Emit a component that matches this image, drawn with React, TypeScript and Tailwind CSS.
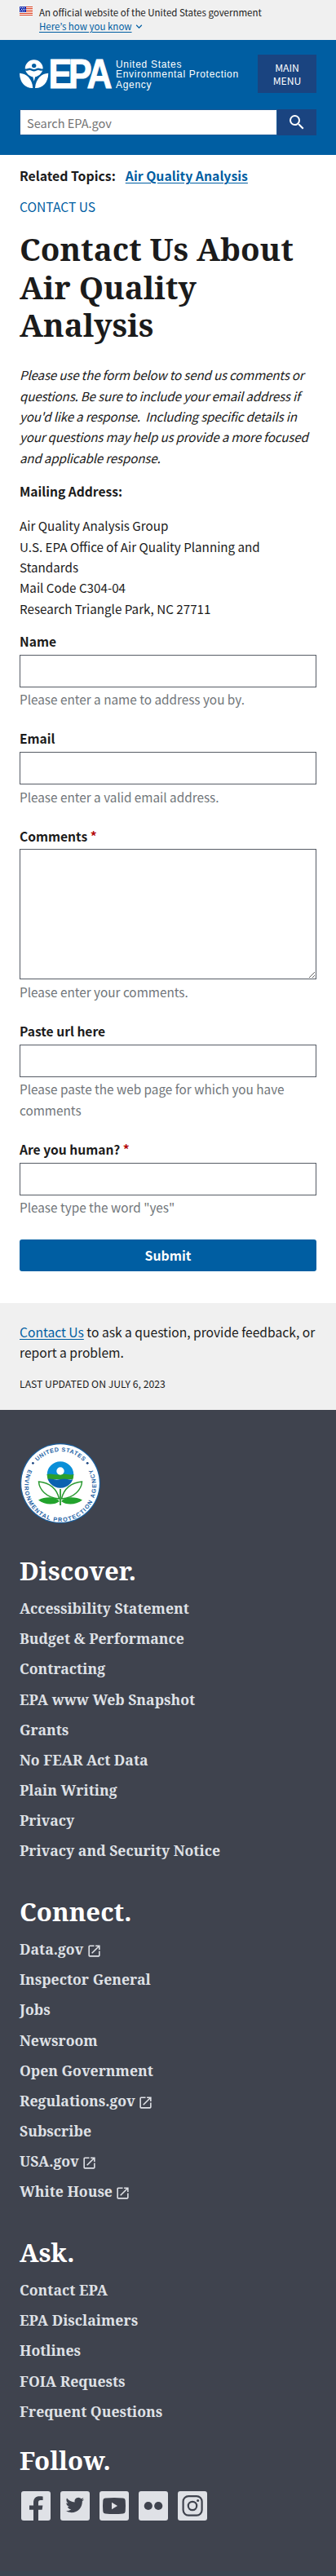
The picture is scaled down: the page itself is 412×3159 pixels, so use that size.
import React from "react";
import { MdExpandMore, MdOpenInNew, MdSearch } from "react-icons/md";

const discover = [
  "Accessibility Statement",
  "Budget & Performance",
  "Contracting",
  "EPA www Web Snapshot",
  "Grants",
  "No FEAR Act Data",
  "Plain Writing",
  "Privacy",
  "Privacy and Security Notice",
];
const connect = [
  "Data.gov",
  "Inspector General",
  "Jobs",
  "Newsroom",
  "Open Government",
  "Regulations.gov",
  "Subscribe",
  "USA.gov",
  "White House",
];
const ask = ["Contact EPA", "EPA Disclaimers", "Hotlines", "FOIA Requests", "Frequent Questions"];
const external = new Set(["Data.gov", "Regulations.gov", "USA.gov", "White House"]);

function Flag() {
  return (
    <svg width="16" height="11" viewBox="0 0 16 11" className="mt-px shrink-0">
      <rect width="16" height="11" fill="#fff" />
      {[0, 2, 4, 6, 8, 10].map((y) => (
        <rect key={y} y={y} width="16" height="1" fill="#db3e1f" />
      ))}
      <rect width="8" height="7" fill="#1e33b1" />
      {[1, 3, 5].map((y) =>
        [1, 3, 5].map((x) => (
          <rect key={`${x}-${y}`} x={x + (y === 3 ? 1 : 0)} y={y} width="1" height="1" fill="#fff" />
        ))
      )}
    </svg>
  );
}

function Logo() {
  return (
    <svg width="118" height="60" viewBox="0 -12 118 60" className="-my-3 shrink-0 overflow-visible" fill="#fff">
      <path d="M6.7 11.2a11 11 0 0 1 22 0c-2.2 1.2-3.7-.6-5.7-.6s-3.3 1.4-5.3 1.4-3.5-1.4-5.5-1.4-3.3 1.8-5.5.6z" />
      <circle cx="17.7" cy="7.6" r="2.7" fill="#005ea2" />
      <path d="M7.3 13.6c2 .5 3.2-.7 5-.7s3.2 1.5 5.3 1.5 3.5-1.5 5.4-1.5 3 1.2 5.1.7c-1.4 4-5 7.2-8.9 7.7l-1.5 5.5-1.5-5.5c-4-.5-7.5-3.7-8.9-7.7z" />
      <path d="M0 16.8c8 .4 15.5 6.5 16.3 18.2C7.5 35.5.2 29 0 16.8z" />
      <path d="M35.3 16.8c-8 .4-15.5 6.5-16.3 18.2 8.8.5 16.1-6 16.3-18.2z" />
      <text
        transform="translate(0 34.7) scale(.86 1)"
        x="41.3 69.9 96"
        fontFamily="Liberation Sans, Arial, sans-serif"
        fontWeight="700"
        fontSize="50"
        stroke="#fff"
        strokeWidth="1"
      >
        EPA
      </text>
    </svg>
  );
}

function Seal() {
  return (
    <svg width="100" height="100" viewBox="0 0 100 100" className="block">
      <circle cx="50" cy="50" r="49" fill="#1a5f9e" />
      <circle cx="50" cy="50" r="47.8" fill="#fff" />
      <defs>
        <path id="seal-top" d="M11 50a39 39 0 0 1 78 0" />
        <path id="seal-bottom" d="M15.2 26.4A43.9 43.9 0 1 0 84.8 26.4" />
      </defs>
      <g fontFamily="Liberation Sans, Arial, sans-serif" fontWeight="700" fontSize="7.2" fill="#1c62a5">
        <text>
          <textPath href="#seal-top" startOffset="50%" textAnchor="middle" textLength="63">UNITED STATES</textPath>
        </text>
        <text>
          <textPath href="#seal-bottom" startOffset="50%" textAnchor="middle" textLength="180">
            ENVIRONMENTAL PROTECTION AGENCY
          </textPath>
        </text>
      </g>
      <circle cx="16.4" cy="25.3" r="1.4" fill="#1a4480" />
      <circle cx="83.2" cy="25.3" r="1.4" fill="#1a4480" />
      <clipPath id="bloom">
        <circle cx="50" cy="39.5" r="16.3" />
      </clipPath>
      <g clipPath="url(#bloom)">
        <rect x="33" y="22" width="34" height="18" fill="#0a8fd8" />
        <path d="M33 39q4.5-.8 8.5 0t8.5 0 8.5 0 8.5 0v6H33z" fill="#2ca02c" />
        <path d="M33 45q4.5-.8 8.5 0t8.5 0 8.5 0 8.5 0v12H33z" fill="#0a62b0" />
      </g>
      <circle cx="50" cy="35" r="4.7" fill="#fff" />
      <g fill="none" stroke="#2b9a32" strokeWidth="1.5">
        <path d="M48.5 69C46 57 37 49 23.5 48c.5 9 9 20 25 21z" />
        <path d="M51.5 69C54 57 63 49 76.5 48c-.5 9-9 20-25 21z" />
        <path d="M50 57v20" strokeWidth="1.8" />
      </g>
      <path d="M49 72c-5-6-17-6-26-1.500C31 77 43 77 49 72zM51 72c5-6 17-6 26-1.500C69 77 57 77 51 72z" fill="#22a32c" />
    </svg>
  );
}

function Social() {
  const tile = <rect width="36" height="36" rx="3" fill="#dfe1e6" />;
  return (
    <div className="ml-0.5 mt-[18px] flex gap-3">
      <svg width="36" height="37" viewBox="0 0 36 37">
        {tile}
        <path
          d="M15 37V22.800h-5v-5.300h5v-3.300C15 8.900 18 6.300 22.300 6.300c2 0 3.800.1 4.300.2v4.400h-2.800c-2.200 0-2.800 1.200-2.800 2.700v3.900h5.400l-.8 5.300H21V37z"
          fill="#3f434e"
        />
      </svg>
      <svg width="36" height="37" viewBox="0 0 36 37">
        {tile}
        <path
          transform="translate(5.5 5)"
          d="M23.643 4.937c-.835.37-1.732.62-2.675.733a4.670 4.670 0 0 0 2.048-2.578 9.300 9.300 0 0 1-2.958 1.130 4.660 4.660 0 0 0-7.938 4.250 13.229 13.229 0 0 1-9.602-4.868c-.4.690-.630 1.490-.630 2.342A4.660 4.660 0 0 0 3.960 9.824a4.647 4.647 0 0 1-2.110-.583v.060a4.660 4.660 0 0 0 3.737 4.568 4.692 4.692 0 0 1-2.104.080 4.661 4.661 0 0 0 4.352 3.234 9.348 9.348 0 0 1-5.786 1.995 9.500 9.500 0 0 1-1.112-.065 13.175 13.175 0 0 0 7.140 2.093c8.570 0 13.255-7.098 13.255-13.254 0-.200-.005-.402-.014-.602a9.470 9.470 0 0 0 2.323-2.410z"
          fill="#3f434e"
        />
      </svg>
      <svg width="36" height="37" viewBox="0 0 36 37">
        {tile}
        <path
          d="M7 8.500q11-1 22 0 2.500.3 2.700 2.700.6 7 0 13.600-.2 2.400-2.700 2.700-11 1-22 0-2.500-.3-2.700-2.700-.6-7 0-13.600Q4.500 8.800 7 8.500z"
          fill="#3f434e"
        />
        <path d="M15 13.700v8.600l7-4.300z" fill="#dfe1e6" />
      </svg>
      <svg width="36" height="37" viewBox="0 0 36 37">
        {tile}
        <circle cx="11.8" cy="18" r="5.1" fill="#3f434e" />
        <circle cx="24.2" cy="18" r="5.1" fill="#3f434e" />
      </svg>
      <svg width="36" height="37" viewBox="0 0 36 37">
        {tile}
        <g fill="none" stroke="#3f434e" strokeWidth="2.2">
          <rect x="6.6" y="6.1" width="23" height="23.5" rx="6.5" />
          <circle cx="18" cy="18" r="5.2" />
        </g>
        <circle cx="24.6" cy="11.4" r="1.5" fill="#3f434e" />
      </svg>
    </div>
  );
}

function Field({ label, help, required, area }: { label: string; help: string; required?: boolean; area?: boolean }) {
  return (
    <div className="flex flex-col">
      <label className="text-[15.6px] font-bold">
        {label}
        {required && <span className="text-[#b50909]"> *</span>}
      </label>
      {area ? (
        <textarea className="mt-[3.3px] block h-40 w-full resize border border-[#565c65] bg-white" />
      ) : (
        <input className="mt-[3.3px] block h-10 w-full border border-[#565c65] bg-white" />
      )}
      <p className="mt-[2.6px] text-[15.3px] text-[#71767a]">{help}</p>
    </div>
  );
}

function LinkGroup({ title, links }: { title: string; links: string[] }) {
  return (
    <section>
      <h2 className="text-[31.1px] font-bold leading-10 text-white">{title}</h2>
      <ul className="mt-[7.8px]">
        {links.map((l) => (
          <li key={l} className="flex h-[37.17px] items-center text-[17.6px] font-bold leading-[37.17px] text-[#dfe1e6]">
            {l}
            {external.has(l) && <MdOpenInNew size={19} className="ml-[3.5px] mt-1" />}
          </li>
        ))}
      </ul>
    </section>
  );
}

export default function App() {
  return (
    <div className="w-full bg-white font-['Noto_Sans_CJK_JP','Noto_Sans',sans-serif] text-[15.2px] leading-[25.4px] text-[#1b1b1b]">
      <div className="flex h-[49px] gap-2 bg-[#f0f0f0] px-6 pt-[7px] text-[11.5px] leading-4">
        <Flag />
        <div>
          <p>An official website of the United States government</p>
          <p className="flex items-center text-[#005ea2]">
            <span className="underline underline-offset-2">Here’s how you know</span>
            <MdExpandMore size={15} className="ml-px mt-0.5" stroke="currentColor" />
          </p>
        </div>
      </div>

      <header className="h-[141px] bg-[#005ea2] px-6 pt-[18px]">
        <div className="flex justify-between">
          <div className="flex pt-[5.5px]">
            <Logo />
            <p className="font-['Liberation_Sans',Arial,sans-serif] text-[12px] leading-[12.5px] tracking-[0.7px] text-white">
              United States
              <br />
              Environmental Protection
              <br />
              Agency
            </p>
          </div>
          <button className="h-[47px] w-[72px] shrink-0 bg-[#1a4480] px-3 text-[12.2px] leading-4 text-white">
            MAIN MENU
          </button>
        </div>
        <div className="mt-5 flex h-8">
          <input
            className="h-8 min-w-0 flex-1 border border-[#1a5a96] bg-white px-2 text-[14.57px] text-[#1b1b1b] placeholder:text-[#757575]"
            placeholder="Search EPA.gov"
          />
          <button className="flex w-[48px] items-center justify-center bg-[#1a4480] text-white">
            <MdSearch size={24} />
          </button>
        </div>
      </header>

      <main className="h-[1408px] px-6 pt-3.5">
        <p className="text-[15.8px] font-bold leading-6">
          Related Topics:
          <a className="ml-3 text-[#005ea2] underline underline-offset-2">Air Quality Analysis</a>
        </p>
        <p className="mt-[13px] text-[15.6px] leading-6 text-[#005ea2]">CONTACT US</p>
        <h1 className="mt-[17px] font-['Noto_Serif','DejaVu_Serif_Condensed',serif] text-[38.5px] font-bold leading-[46.5px]">
          Contact Us About
          <br />
          Air Quality
          <br />
          Analysis
        </h1>
        <p className="mt-[25.6px] whitespace-nowrap italic tracking-[-0.19px]">
          Please use the form below to send us comments or
          <br />
          questions. Be sure to include your email address if
          <br />
          you'd like a response.&nbsp; Including specific details in
          <br />
          your questions may help us provide a more focused
          <br />
          and applicable response.
        </p>
        <p className="mt-4 text-[15.6px] font-bold">Mailing Address:</p>
        <p className="mt-[16.6px]">
          Air Quality Analysis Group
          <br />
          U.S. EPA Office of Air Quality Planning and
          <br />
          Standards
          <br />
          Mail Code C304-04
          <br />
          Research Triangle Park, NC 27711
        </p>
        <form className="mt-[14.7px] flex flex-col gap-[22.7px]">
          <Field label="Name" help="Please enter a name to address you by." />
          <Field label="Email" help="Please enter a valid email address." />
          <Field label="Comments" help="Please enter your comments." required area />
          <Field label="Paste url here" help="Please paste the web page for which you have comments" />
          <Field label="Are you human?" help={'Please type the word "yes"'} required />
          <button className="mt-[3.3px] h-[39px] w-full rounded-[3px] bg-[#005ea2] text-[15.8px] font-bold leading-[39px] text-white">
            Submit
          </button>
        </form>
      </main>

      <div className="h-[131px] bg-[#f0f0f0] px-6 pt-[22.6px]">
        <p className="whitespace-nowrap text-[15.6px]">
          <a className="text-[#005ea2] underline underline-offset-2">Contact Us</a> to ask a question, provide feedback, or
          <br />
          report a problem.
        </p>
        <p className="mt-[15.6px] text-[12.2px] leading-5">LAST UPDATED ON JULY 6, 2023</p>
      </div>

      <footer className="h-[1430px] border-b-[6px] border-[#3b4550] bg-[#3f434e] px-6 pt-10 font-['Noto_Serif','DejaVu_Serif_Condensed',serif]">
        <Seal />
        <div className="mt-[37.3px] flex flex-col gap-[35.8px]">
          <LinkGroup title="Discover." links={discover} />
          <LinkGroup title="Connect." links={connect} />
          <LinkGroup title="Ask." links={ask} />
        </div>
        <h2 className="mt-[20.7px] text-[31.1px] font-bold leading-10 text-white">Follow.</h2>
        <Social />
      </footer>
    </div>
  );
}
